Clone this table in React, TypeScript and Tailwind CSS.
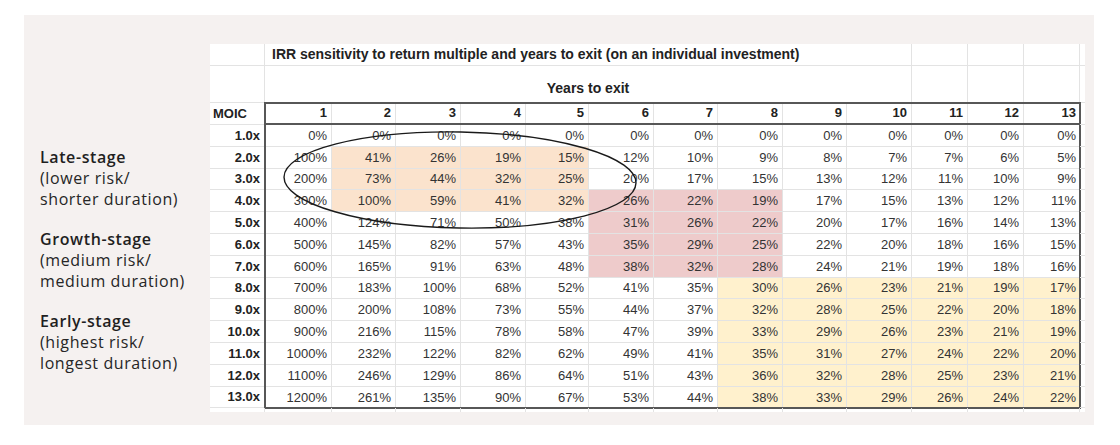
import React from 'react';

const COL_W = [
  'w-[67px]', 'w-[64px]', 'w-[65px]', 'w-[65px]', 'w-[63px]', 'w-[65px]', 'w-[64px]',
  'w-[65px]', 'w-[64px]', 'w-[65px]', 'w-[56px]', 'w-[56px]', 'w-[56px]',
];

// row heights follow the ~21.8px rhythm of the sheet
const ROW_H = ['h-[22px]', 'h-[22px]', 'h-[21px]', 'h-[22px]', 'h-[22px]', 'h-[22px]', 'h-[22px]', 'h-[21px]', 'h-[22px]', 'h-[22px]', 'h-[22px]', 'h-[22px]', 'h-[21px]'];

const MOIC = Array.from({ length: 13 }, (_, i) => i + 1);
const YEARS = Array.from({ length: 13 }, (_, i) => i + 1);

const irr = (m: number, y: number) => `${Math.round((Math.pow(m, 1 / y) - 1) * 100)}%`;

const cellBg = (r: number, c: number) => {
  // r, c are 1-based MOIC and year
  if (r >= 2 && r <= 4 && c >= 2 && c <= 5) return 'bg-[#fbe3cd]';
  if (r >= 4 && r <= 7 && c >= 6 && c <= 8) return 'bg-[#eecbcb]';
  if (r >= 8 && c >= 8) return 'bg-[#fff1cd]';
  return '';
};

const stages = [
  { title: 'Late-stage', lines: ['(lower risk/', 'shorter duration)'] },
  { title: 'Growth-stage', lines: ['(medium risk/', 'medium duration)'] },
  { title: 'Early-stage', lines: ['(highest risk/', 'longest duration)'] },
];

const grid = 'border-r border-b border-[#e3e3e3]';

export default function App() {
  return (
    <div className="w-[1120px] h-[445px] bg-white pt-[15px] pl-[24px]">
      <div className="w-[1070px] h-[410px] bg-[#f5f1f0] flex">
        {/* stage labels */}
        <div className="w-[186px] pl-[16px] pt-[132px] flex flex-col gap-[19px] text-[16px] leading-[21px] tracking-[0.6px] text-[#262626] font-['Open_Sans',sans-serif]">
          {stages.map((s) => (
            <div key={s.title}>
              <div className="font-semibold text-[#1f1f1f]">{s.title}</div>
              {s.lines.map((l) => (
                <div key={l}>{l}</div>
              ))}
            </div>
          ))}
        </div>

        {/* sheet */}
        <div className="relative mt-[29px] w-[875px] h-[368px] bg-white font-['Liberation_Sans',Arial,sans-serif] text-[13px] text-[#333]">
          <div className="flex h-[22px]">
            <div className={`w-[55px] ${grid}`} />
            <div className={`w-[647px] ${grid} pl-[7px] flex items-center font-bold text-[14px] text-[#222]`}>
              IRR sensitivity to return multiple and years to exit (on an individual investment)
            </div>
            <div className={`w-[56px] ${grid}`} />
            <div className={`w-[56px] ${grid}`} />
            <div className={`w-[56px] ${grid}`} />
            <div className="w-[5px] border-b border-[#e3e3e3]" />
          </div>
          <div className="flex h-[37px]">
            <div className={`w-[55px] ${grid}`} />
            <div className={`w-[647px] ${grid} flex items-end justify-center pb-[3px] font-bold text-[14px] text-[#222]`}>
              Years to exit
            </div>
            <div className={`w-[56px] ${grid}`} />
            <div className={`w-[56px] ${grid}`} />
            <div className={`w-[56px] ${grid}`} />
            <div className="w-[5px] border-b border-[#e3e3e3]" />
          </div>

          <div className="flex">
            {/* MOIC labels */}
            <div className="w-[55px] flex flex-col font-bold text-[#222]">
              <div className={`h-[22px] ${grid} flex items-center pl-[3px]`}>MOIC</div>
              {MOIC.map((m, i) => (
                <div key={m} className={`${ROW_H[i]} ${grid} flex items-center justify-end pr-[4px]`}>
                  {m}.0x
                </div>
              ))}
            </div>

            {/* framed data block */}
            <div className="w-[815px] flex flex-col outline-2 outline-[#575757] outline-offset-[-1px]">
              <div className="h-[22px] flex border-b-2 border-[#575757] font-bold text-[#222]">
                {YEARS.map((y, j) => (
                  <div key={y} className={`${COL_W[j]} ${j < 12 ? 'border-r border-[#e3e3e3]' : ''} flex items-center justify-end pr-[4px]`}>
                    {y}
                  </div>
                ))}
              </div>
              {MOIC.map((m, i) => (
                <div key={m} className={`${ROW_H[i]} flex`}>
                  {YEARS.map((y, j) => (
                    <div
                      key={y}
                      className={`${COL_W[j]} ${cellBg(m, y)} ${j < 12 ? 'border-r' : ''} ${i < 12 ? 'border-b' : ''} border-[#e3e3e3] flex items-center justify-end pr-[4px]`}
                    >
                      {irr(m, y)}
                    </div>
                  ))}
                </div>
              ))}
            </div>

            <div className="w-[5px] flex flex-col">
              <div className="h-[22px] border-b border-[#e3e3e3]" />
              {MOIC.map((m, i) => (
                <div key={m} className={`${ROW_H[i]} border-b border-[#e3e3e3]`} />
              ))}
            </div>
          </div>

          {/* partially visible next row */}
          <div className="flex h-[4px]">
            <div className="w-[55px] border-r border-[#e3e3e3]" />
            {COL_W.map((w, j) => (
              <div key={j} className={`${w} border-r border-[#e3e3e3]`} />
            ))}
          </div>

          {/* hand-drawn ellipse */}
          <svg className="absolute left-0 top-0 pointer-events-none" width="875" height="368">
            <ellipse cx="250" cy="136" rx="176" ry="48" transform="rotate(1 250 136)" fill="none" stroke="#1a1a1a" strokeWidth="1.4" />
          </svg>
        </div>
      </div>
    </div>
  );
}
